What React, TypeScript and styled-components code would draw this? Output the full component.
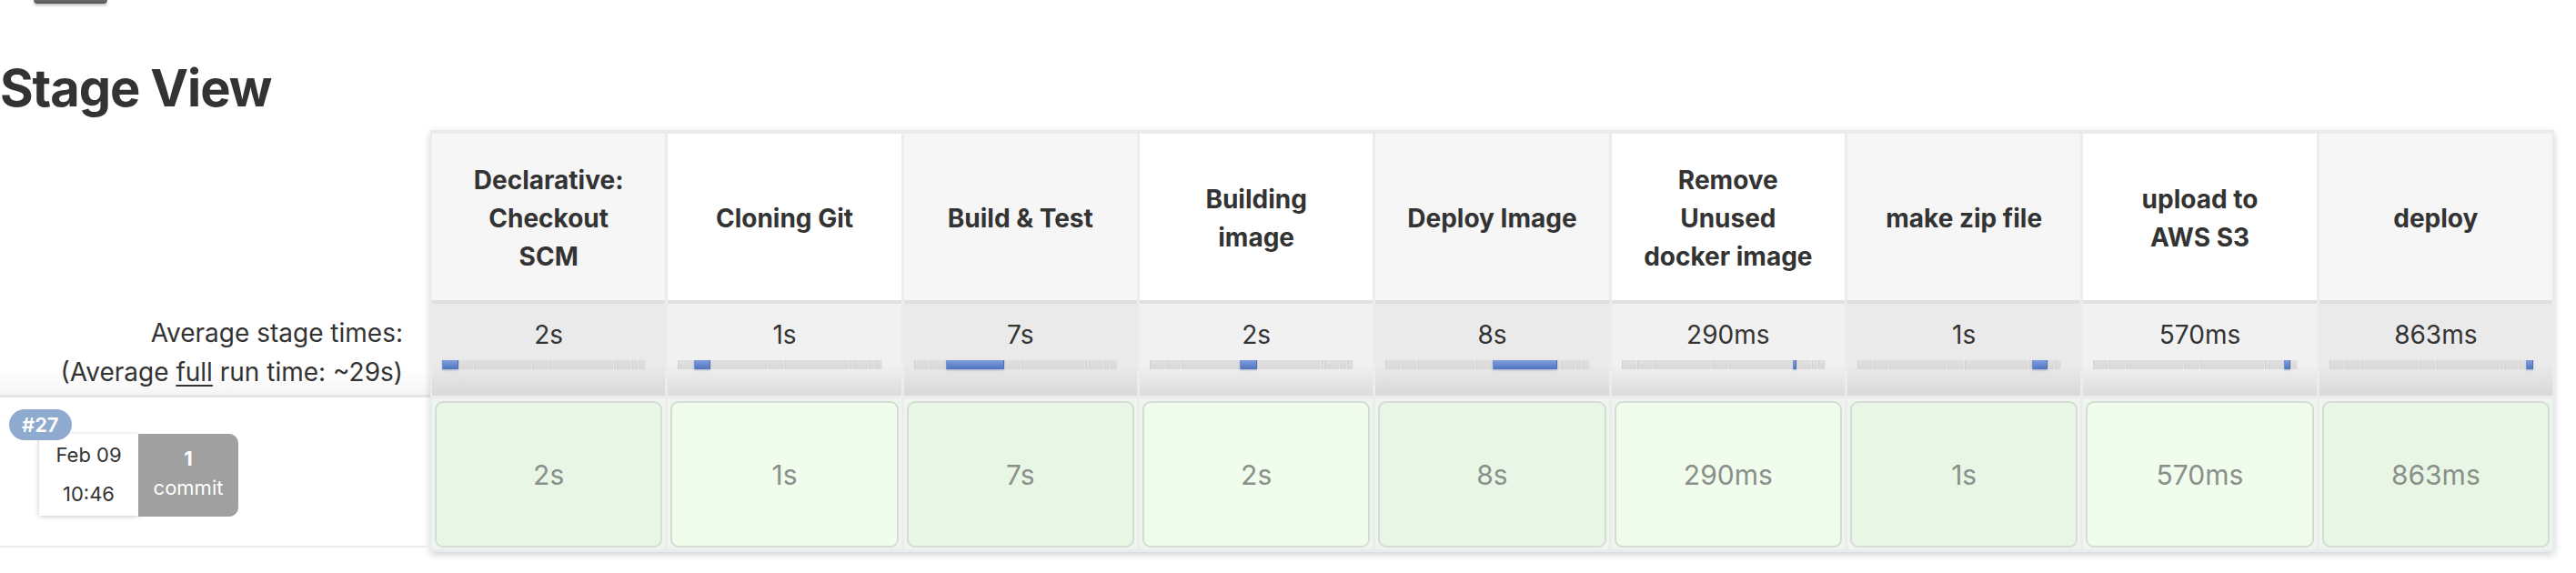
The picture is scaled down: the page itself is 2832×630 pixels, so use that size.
import React from "react";
import styled, { createGlobalStyle } from "styled-components";

const GlobalStyle = createGlobalStyle`
  *, *::before, *::after { box-sizing: border-box; }
  html, body { margin: 0; padding: 0; background: #ffffff; }
  body {
    font-family: Inter, "Noto Sans", "Liberation Sans", sans-serif;
    color: #333333;
    width: 2832px;
    overflow: hidden;
  }
`;

type Stage = {
  name: string;
  avg: string;
  run: string;
  weight: number;
};

const stages: Stage[] = [
  { name: "Declarative: Checkout SCM", avg: "2s", run: "2s", weight: 17 },
  { name: "Cloning Git", avg: "1s", run: "1s", weight: 17 },
  { name: "Build & Test", avg: "7s", run: "7s", weight: 67 },
  { name: "Building image", avg: "2s", run: "2s", weight: 18 },
  { name: "Deploy Image", avg: "8s", run: "8s", weight: 74 },
  { name: "Remove Unused docker image", avg: "290ms", run: "290ms", weight: 2 },
  { name: "make zip file", avg: "1s", run: "1s", weight: 16 },
  { name: "upload to AWS S3", avg: "570ms", run: "570ms", weight: 6 },
  { name: "deploy", avg: "863ms", run: "863ms", weight: 6 },
];

const Page = styled.div`
  width: 2832px;
  height: 630px;
  overflow: hidden;
`;

const TopStub = styled.div`
  margin-left: 37px;
  width: 81px;
  height: 4px;
  background: linear-gradient(#6c6c6c, #555555);
  border-radius: 0 0 6px 6px;
  box-shadow: 0 2px 3px rgba(0, 0, 0, 0.25);
`;

const Title = styled.h2`
  margin: 59px 0 12px 0;
  font-size: 56px;
  line-height: 68px;
  font-weight: 700;
  color: #333333;
  letter-spacing: -1.1px;
`;

const StageView = styled.div`
  display: flex;
  align-items: flex-start;
`;

const LeftColumn = styled.div`
  flex: none;
  width: 473px;
  display: flex;
  flex-direction: column;
`;

const HeaderSpacer = styled.div`
  height: 187px;
`;

const AvgLabel = styled.div`
  height: 107px;
  padding: 15px 30px 0 0;
  text-align: right;
  font-size: 28px;
  line-height: 43px;
  color: #333333;
  border-bottom: 3px solid #e5e5e5;
  background: linear-gradient(to bottom, #ffffff 72%, #f5f5f5 100%);
`;

const Underlined = styled.span`
  text-decoration: underline;
  text-underline-offset: 4px;
`;

const BuildRow = styled.div`
  position: relative;
  height: 165px;
  padding: 40px 0 0 43px;
  display: flex;
  align-items: flex-start;
  border-bottom: 2px solid #ececec;
`;

const Badge = styled.div`
  position: absolute;
  left: 10px;
  top: 13px;
  z-index: 2;
  height: 34px;
  padding: 0 14px;
  border-radius: 17px;
  background: #8eabcf;
  color: #ffffff;
  font-size: 22px;
  font-weight: 600;
  line-height: 34px;
`;

const DateBox = styled.div`
  width: 109px;
  height: 90px;
  padding-top: 2px;
  background: #ffffff;
  box-shadow: 0 1px 5px rgba(0, 0, 0, 0.22);
  text-align: center;
  font-size: 22px;
  line-height: 43px;
  color: #333333;
`;

const CommitBox = styled.div`
  width: 110px;
  height: 91px;
  padding-top: 11px;
  background: #a0a0a0;
  border-radius: 0 10px 10px 0;
  text-align: center;
  font-size: 22px;
  line-height: 32px;
  color: #ffffff;
`;

const CommitCount = styled.div`
  font-weight: 700;
`;

const TableBox = styled.div`
  flex: none;
  width: 2335px;
  display: grid;
  grid-template-columns: repeat(9, 1fr);
  grid-template-rows: 183px 105px 169px;
  column-gap: 3px;
  background: #ececec;
  border: 2px solid #e8ecef;
  border-top-width: 4px;
  border-bottom-width: 3px;
  box-shadow: 0 3px 8px rgba(0, 0, 0, 0.18);
`;

const HeaderCell = styled.div<{ $odd: boolean }>`
  display: flex;
  align-items: center;
  justify-content: center;
  padding: 2px 32px 0;
  text-align: center;
  font-size: 28px;
  font-weight: 700;
  line-height: 42px;
  color: #333333;
  background: ${(p) => (p.$odd ? "#f6f6f6" : "#ffffff")};
`;

const AvgCell = styled.div<{ $odd: boolean }>`
  padding-top: 13px;
  text-align: center;
  font-size: 28px;
  line-height: 42px;
  color: #333333;
  border-top: 4px solid #e0e0e0;
  background: ${(p) =>
    p.$odd
      ? "linear-gradient(to bottom, #eaeaea 66%, #d9d9d9 100%)"
      : "linear-gradient(to bottom, #f1f1f1 66%, #dcdcdc 100%)"};
`;

const Bar = styled.div`
  display: flex;
  height: 10px;
  margin: 7px 21px 0 11px;
  background: #dcdcdc;
`;

const Segment = styled.div<{ $active: boolean }>`
  height: 100%;
  min-width: 2px;
  border-right: 1px solid ${(p) => (p.$active ? "#4f6fb5" : "#e7e7e7")};
  border-left: 1px solid ${(p) => (p.$active ? "#6f8fd2" : "#d2d2d2")};
  background: ${(p) =>
    p.$active
      ? "linear-gradient(to bottom, #7f9fdc 0%, #6385cc 60%, #5274be 100%)"
      : "linear-gradient(to bottom, #e0e0e0, #d8d8d8)"};
  box-shadow: ${(p) => (p.$active ? "0 1px 2px rgba(40, 70, 140, 0.35)" : "none")};
`;

const RunCell = styled.div`
  margin-top: 3px;
  padding: 3px 3px 2px;
  background: #eef5ed;
`;

const RunBox = styled.div<{ $odd: boolean }>`
  height: 100%;
  display: flex;
  align-items: center;
  justify-content: center;
  border: 2px solid #d5dbd5;
  border-radius: 9px;
  background: ${(p) => (p.$odd ? "#e8f7e5" : "#f0fdec")};
  font-size: 30px;
  color: #8a8f8a;
`;

export default function App() {
  const total = stages.reduce((s, st) => s + st.weight, 0);
  return (
    <Page>
      <GlobalStyle />
      <TopStub />
      <Title>Stage View</Title>
      <StageView>
        <LeftColumn>
          <HeaderSpacer />
          <AvgLabel>
            Average stage times:
            <br />
            (Average <Underlined>full</Underlined> run time: ~29s)
          </AvgLabel>
          <BuildRow>
            <Badge>#27</Badge>
            <DateBox>
              <div>Feb 09</div>
              <div>10:46</div>
            </DateBox>
            <CommitBox>
              <CommitCount>1</CommitCount>
              <div>commit</div>
            </CommitBox>
          </BuildRow>
        </LeftColumn>
        <TableBox>
          {stages.map((st, i) => (
            <HeaderCell key={`h${i}`} $odd={i % 2 === 0}>
              {st.name}
            </HeaderCell>
          ))}
          {stages.map((st, i) => (
            <AvgCell key={`a${i}`} $odd={i % 2 === 0}>
              {st.avg}
              <Bar>
                {stages.map((seg, j) => (
                  <Segment
                    key={j}
                    $active={j === i}
                    style={{ flex: `${seg.weight / total} 1 0` }}
                  />
                ))}
              </Bar>
            </AvgCell>
          ))}
          {stages.map((st, i) => (
            <RunCell key={`r${i}`}>
              <RunBox $odd={i % 2 === 0}>{st.run}</RunBox>
            </RunCell>
          ))}
        </TableBox>
      </StageView>
    </Page>
  );
}
